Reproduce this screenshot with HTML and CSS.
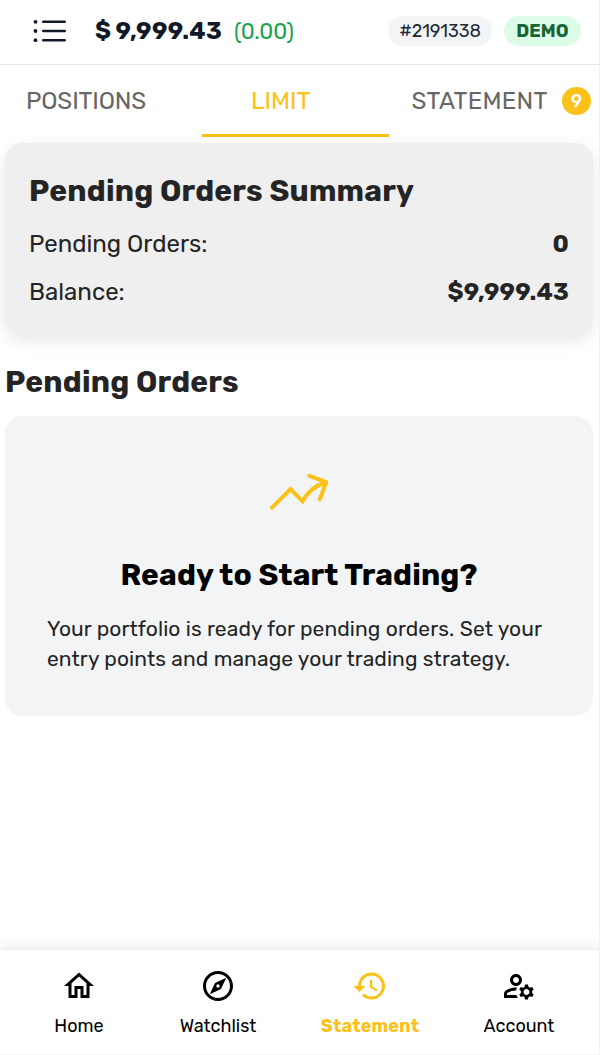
FILE: index.html
```
<!DOCTYPE html>
<html lang="en">
<head>
<meta charset="utf-8">
<title>Pending Orders</title>
<link rel="stylesheet" href="styles.css">
</head>
<body>
<div class="app">
  <header class="topbar">
    <svg class="menu" viewBox="0 0 36 24" width="36" height="24">
      <g fill="#111827"><circle cx="3.5" cy="2.8" r="1.9"/><circle cx="3.5" cy="12" r="1.9"/><circle cx="3.5" cy="21.2" r="1.9"/></g>
      <path d="M11.2 2.8H32.8M11.2 12H32.8M11.2 21.2H32.8" stroke="#111827" stroke-width="2.4" stroke-linecap="round"/>
    </svg>
    <span class="balance">$ 9,999.43</span>
    <span class="change">(0.00)</span>
    <span class="pill pill-id"><span>#2191338</span></span>
    <span class="pill pill-demo"><span>DEMO</span></span>
  </header>
  <nav class="tabs">
    <div class="tab tab-positions"><span>POSITIONS</span></div>
    <div class="tab tab-limit"><span>LIMIT</span></div>
    <div class="tab tab-statement"><span>STATEMENT</span><b class="count">9</b></div>
  </nav>
  <main class="content">
    <section class="summary">
      <h2 class="heading summary-title">Pending Orders Summary</h2>
      <div class="row"><span>Pending Orders:</span><b>0</b></div>
      <div class="row"><span>Balance:</span><b>$9,999.43</b></div>
    </section>
    <h2 class="heading orders-title">Pending Orders</h2>
    <section class="empty">
      <svg class="trend" viewBox="0 0 72 72" width="72" height="72" fill="none" stroke="#fac119" stroke-width="4" stroke-linecap="round" stroke-linejoin="miter">
        <path d="M9 51.7L27.5 33.2L39.5 45.2C43.5 37.7 51 30 62.5 26.5"/>
        <path d="M46.3 19.8L63.2 26.2L56.8 43.3" stroke-linejoin="round"/>
      </svg>
      <h3 class="empty-title">Ready to Start Trading?</h3>
      <p class="empty-text">Your portfolio is ready for pending orders. Set your<br>entry points and manage your trading strategy.</p>
    </section>
  </main>
  <footer class="bottom">
    <div class="item item-home">
      <svg viewBox="0 0 24 24" width="36" height="36"><path d="M12 5.69l5 4.5V18h-2v-6H9v6H7v-7.81l5-4.5M12 3L2 12h3v8h6v-6h2v6h6v-8h3L12 3z"/></svg>
      <span>Home</span>
    </div>
    <div class="item item-watch">
      <svg viewBox="0 0 24 24" width="36" height="36"><path d="M12 2C6.48 2 2 6.48 2 12s4.48 10 10 10 10-4.48 10-10S17.52 2 12 2zm0 18c-4.41 0-8-3.59-8-8s3.59-8 8-8 8 3.59 8 8-3.59 8-8 8zm-5.5-2.5l7.51-3.49L17.5 6.5 9.99 9.99 6.5 17.5zm5.5-6.6c.61 0 1.1.49 1.1 1.1s-.49 1.1-1.1 1.1-1.1-.49-1.1-1.1.49-1.1 1.1-1.1z"/></svg>
      <span>Watchlist</span>
    </div>
    <div class="item item-statement">
      <svg viewBox="0 0 24 24" width="36" height="36"><path d="M13 3c-4.97 0-9 4.03-9 9H1l3.89 3.89.07.14L9 12H6c0-3.87 3.13-7 7-7s7 3.13 7 7-3.13 7-7 7c-1.93 0-3.68-.79-4.94-2.06l-1.42 1.42C8.27 19.99 10.51 21 13 21c4.97 0 9-4.03 9-9s-4.03-9-9-9zm-1 5v5l4.28 2.54.72-1.21-3.5-2.08V8H12z"/></svg>
      <span>Statement</span>
    </div>
    <div class="item item-account">
      <svg viewBox="0 0 24 24" width="36" height="36"><path d="M4 18v-.65c0-.34.16-.66.41-.81C6.1 15.53 8.03 15 10 15c.03 0 .05 0 .08.01.1-.7.3-1.37.59-1.98-.22-.02-.44-.03-.67-.03-2.42 0-4.68.67-6.61 1.82-.88.52-1.39 1.5-1.39 2.53V20h9.26c-.42-.6-.75-1.28-.97-2H4zM10 12c2.21 0 4-1.79 4-4s-1.79-4-4-4-4 1.79-4 4 1.79 4 4 4zm0-6c1.1 0 2 .9 2 2s-.9 2-2 2-2-.9-2-2 .9-2 2-2zM20.75 16c0-.22-.03-.42-.06-.63l1.14-1.01-1-1.73-1.45.49c-.32-.27-.68-.48-1.08-.63L18 11h-2l-.3 1.49c-.4.15-.76.36-1.08.63l-1.45-.49-1 1.73 1.14 1.01c-.03.21-.06.41-.06.63s.03.42.06.63l-1.14 1.01 1 1.73 1.45-.49c.32.27.68.48 1.08.63L16 21h2l.3-1.49c.4-.15.76-.36 1.08-.63l1.45.49 1-1.73-1.14-1.01c.03-.21.06-.41.06-.63zM17 18c-1.1 0-2-.9-2-2s.9-2 2-2 2 .9 2 2-.9 2-2 2z"/></svg>
      <span>Account</span>
    </div>
  </footer>
</div>
</body>
</html>
```
FILE: styles.css
```
* { box-sizing: border-box; }
body { margin: 0; background: #fff; color: #242424; font-family: Rubik, Roboto, sans-serif; white-space: nowrap; }
h2, h3, p { margin: 0; }
.app { width: 600px; height: 1055px; display: flex; flex-direction: column; border-right: 1px solid #f1f1f3; overflow: hidden; }
.topbar { height: 65px; flex: none; display: flex; align-items: center; padding: 0 18px 3px 32px; border-bottom: 1px solid #e5e7eb; }
.menu { flex: none; }
.balance { width: 139px; padding-left: 27px; box-sizing: content-box; font: 700 24px/32px Rubik, Inter, sans-serif; letter-spacing: .4px; word-spacing: -1.5px; color: #111827; }
.change { flex: 1; font-size: 22px; color: #16a34a; padding-top: 2px; letter-spacing: -.1px; }
.pill { height: 30px; border-radius: 15px; display: flex; align-items: center; justify-content: center; font-size: 18px; }
.pill-id { width: 104px; background: #f3f4f6; color: #1f2937; margin-right: 12px; letter-spacing: -.1px; }
.pill-demo { width: 77px; background: #dcfce7; color: #166534; font-weight: 700; letter-spacing: .1px; }
.tabs { height: 72px; flex: none; display: flex; font-size: 24px; color: #666; }
.tab { display: flex; align-items: center; height: 72px; }
.tab-positions { width: 202px; padding-left: 26px; letter-spacing: -.15px; }
.tab-limit { width: 187px; padding-left: 49px; color: #fac119; border-bottom: 3px solid #fac119; padding-top: 3px; }
.tab-statement { flex: 1; padding-left: 22.6px; letter-spacing: .25px; }
.count { margin-left: auto; margin-right: 8px; width: 29px; height: 28px; border-radius: 50%; background: #fac119; color: #fff; font: 500 18px/29px Rubik, Roboto, sans-serif; text-align: center; letter-spacing: 0; }
.content { flex: 1; padding: 6px 6px 0 5px; }
.summary { height: 191px; padding: 28px 24px 0; background: #efefef; border-radius: 18px; box-shadow: 0 6px 18px rgba(0,0,0,.1); }
.heading { font: 700 30px/40px Rubik, Inter, sans-serif; letter-spacing: .19px; }
.row { height: 48px; display: flex; justify-content: space-between; align-items: center; font-size: 24px; }
.summary-title { margin-bottom: 9px; }
.row b { font: 700 24px/32px Rubik, Inter, sans-serif; letter-spacing: .2px; }
.orders-title { margin-top: 28px; margin-bottom: 14px; }
.empty { height: 300px; border-radius: 18px; background: #f3f4f6; display: flex; flex-direction: column; align-items: center; padding-top: 40px; }
.empty-title { margin-top: 27px; color: #000; font: 700 30px/40px Rubik, Inter, sans-serif; letter-spacing: .15px; }
.empty-text { align-self: stretch; padding: 19px 0 0 42px; font-size: 21px; line-height: 30px; letter-spacing: .1px; }
.bottom { height: 106px; flex: none; display: flex; justify-content: center; border-top: 1px solid #eee; border-bottom: 1px solid #f6f6f6; box-shadow: 0 -3px 15px rgba(0,0,0,.08); color: #000; font-size: 18px; padding: 18px 0 0 15px; }
.item { display: flex; flex-direction: column; align-items: center; gap: 11px; line-height: 22px; fill: currentColor; }
.item-home { width: 120px; }
.item-watch { width: 158px; }
.item-statement { width: 146px; color: #fac119; font-weight: 700; letter-spacing: .15px; }
.item-account { width: 152px; }
```
